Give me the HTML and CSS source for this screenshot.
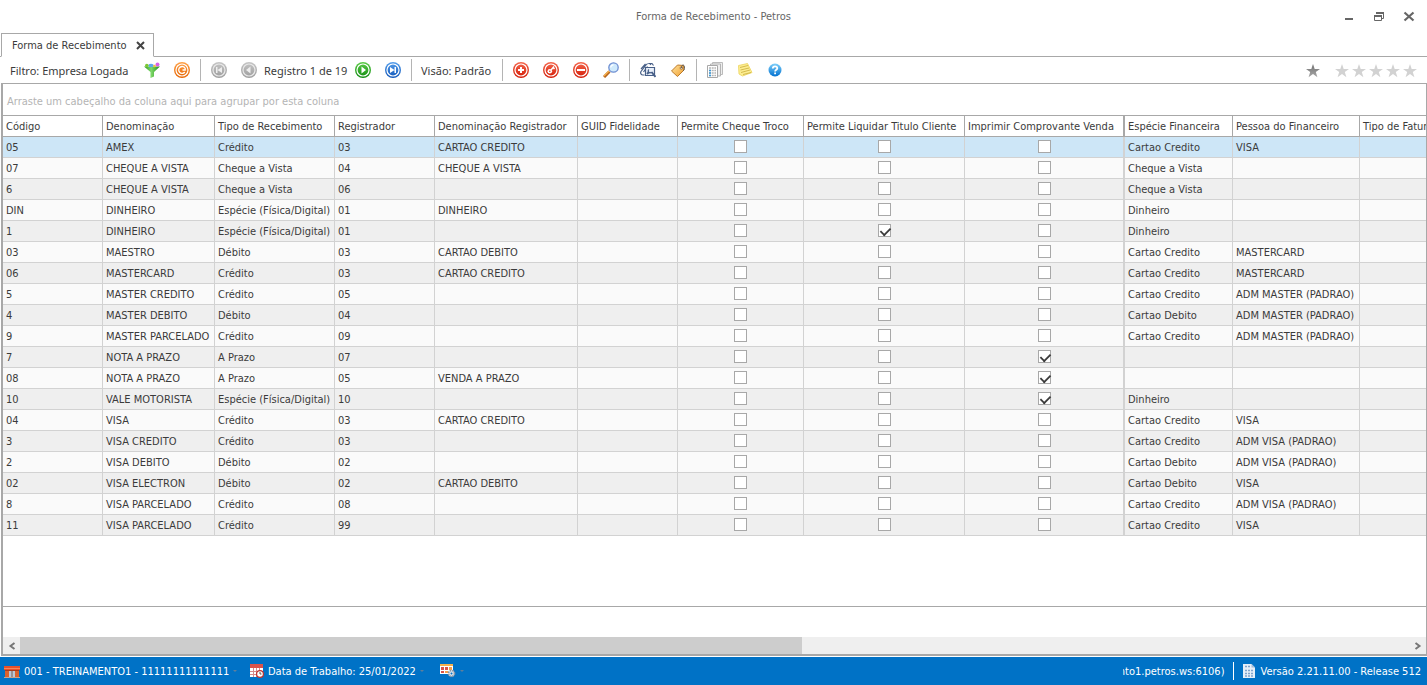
FILE: index.html
```html
<!DOCTYPE html>
<html lang="pt-BR">
<head>
    <meta charset="utf-8">
    <title>Forma de Recebimento - Petros</title>
    <link rel="stylesheet" href="styles.css">
</head>
<body>
    <!-- shared gradients -->
    <svg class="defs" aria-hidden="true">
        <defs>
            <linearGradient id="g-green" x1="0" y1="0" x2="0" y2="1"><stop offset="0" stop-color="#5fce4a"/><stop offset="1" stop-color="#0f8a10"/></linearGradient>
            <linearGradient id="g-orange" x1="0" y1="0" x2="0" y2="1"><stop offset="0" stop-color="#ffa34a"/><stop offset="1" stop-color="#e66300"/></linearGradient>
            <linearGradient id="g-red" x1="0" y1="0" x2="0" y2="1"><stop offset="0" stop-color="#f4694f"/><stop offset="1" stop-color="#d31a05"/></linearGradient>
            <linearGradient id="g-blue" x1="0" y1="0" x2="0" y2="1"><stop offset="0" stop-color="#58a0ec"/><stop offset="1" stop-color="#0f55b8"/></linearGradient>
            <linearGradient id="g-gray" x1="0" y1="0" x2="0" y2="1"><stop offset="0" stop-color="#c6c6c6"/><stop offset="1" stop-color="#9c9c9c"/></linearGradient>
            <linearGradient id="g-help" x1="0" y1="0" x2="0" y2="1"><stop offset="0" stop-color="#7fd0fa"/><stop offset="1" stop-color="#0070d0"/></linearGradient>
            <linearGradient id="g-star" x1="0" y1="0" x2="0" y2="1"><stop offset="0" stop-color="#707070"/><stop offset="1" stop-color="#a8a8a8"/></linearGradient>
            <linearGradient id="g-tag" x1="0" y1="0" x2="1" y2="1"><stop offset="0" stop-color="#ffe3a0"/><stop offset="1" stop-color="#f0a030"/></linearGradient>
            <linearGradient id="g-funnel"><stop offset="0" stop-color="#2c9a24"/><stop offset=".45" stop-color="#7ed968"/><stop offset="1" stop-color="#1f8a1a"/></linearGradient>
        </defs>
    </svg>

    <header class="titlebar">
        <h1>Forma de Recebimento - Petros</h1>
        <div class="window-buttons">
            <button aria-label="Minimizar"><svg width="12" height="12"><path d="M2 7h8v2H2z" fill="#666"/></svg></button>
            <button aria-label="Restaurar"><svg width="12" height="12"><path d="M3.5 3V1.500h7v6H9" fill="none" stroke="#666"/><path d="M3 1h8v2H3z" fill="#666"/><path d="M1.500 4.500h7v5h-7z" fill="none" stroke="#666"/><path d="M1 4h8v2H1z" fill="#666"/></svg></button>
            <button aria-label="Fechar"><svg width="12" height="12"><path d="M1.500 1.500l9 8M10.500 1.500l-9 8" stroke="#666" stroke-width="2.200"/></svg></button>
        </div>
    </header>

    <nav class="tabs">
        <div class="tab">
            <span>Forma de Recebimento</span>
            <button aria-label="Fechar aba"><svg width="9" height="9"><path d="M1 1l7 7M8 1l-7 7" stroke="#444" stroke-width="2"/></svg></button>
        </div>
    </nav>

    <div class="toolbar">
        <button class="label filter">Filtro: Empresa Logada</button>
        <button class="tool" aria-label="Filtrar"><svg width="16" height="16"><path d="M0 4.500h16L10 10v4.500L6.500 16v-6z" fill="url(#g-funnel)"/><ellipse cx="7" cy="3.500" rx="2.800" ry="1.800" fill="#5fa8ea"/><circle cx="2.800" cy="3.500" r="1.800" fill="#7cc832"/><circle cx="10.500" cy="4" r="1.300" fill="#f2c03a"/><circle cx="13.500" cy="2.500" r="2" fill="#d95fe8"/></svg></button>
        <button class="tool" aria-label="Atualizar"><svg width="16" height="16"><circle cx="8" cy="8" r="8" fill="url(#g-orange)"/><circle cx="8" cy="8" r="6" fill="none" stroke="#fff" stroke-width="1.200"/><path d="M10.800 10A3.400 3.400 0 1 1 11.200 6.500V8H8.500" fill="none" stroke="#fff" stroke-width="1.300"/></svg></button>
        <i class="sep"></i>
        <button class="tool" aria-label="Primeiro" disabled><svg width="16" height="16"><circle cx="8" cy="8" r="8" fill="url(#g-gray)"/><circle cx="8" cy="8" r="6" fill="none" stroke="#e8e8e8" stroke-width="1.200"/><path d="M5 5h1.500v6H5zM11 5v6L6.500 8z" fill="#eee"/></svg></button>
        <button class="tool" aria-label="Anterior" disabled><svg width="16" height="16"><circle cx="8" cy="8" r="8" fill="url(#g-gray)"/><circle cx="8" cy="8" r="6" fill="none" stroke="#e8e8e8" stroke-width="1.200"/><path d="M9.500 4.500v7L5 8z" fill="#eee"/></svg></button>
        <span class="record">Registro 1 de 19</span>
        <button class="tool" aria-label="Próximo"><svg width="16" height="16"><circle cx="8" cy="8" r="8" fill="url(#g-green)"/><circle cx="8" cy="8" r="6" fill="none" stroke="#fff" stroke-width="1.200"/><path d="M6.500 4.500v7L11 8z" fill="#fff"/></svg></button>
        <button class="tool" aria-label="Último"><svg width="16" height="16"><circle cx="8" cy="8" r="8" fill="url(#g-blue)"/><circle cx="8" cy="8" r="6" fill="none" stroke="#fff" stroke-width="1.200"/><path d="M9.500 5H11v6H9.500zM5 5v6l4.500-3z" fill="#fff"/></svg></button>
        <i class="sep"></i>
        <button class="label view">Visão: Padrão</button>
        <i class="sep"></i>
        <button class="tool" aria-label="Novo"><svg width="16" height="16"><circle cx="8" cy="8" r="8" fill="url(#g-red)"/><circle cx="8" cy="8" r="6" fill="none" stroke="#fff" stroke-width="1.200"/><path d="M7 5h2v2h2v2H9v2H7V9H5V7h2z" fill="#fff"/></svg></button>
        <button class="tool" aria-label="Editar"><svg width="16" height="16"><circle cx="8" cy="8" r="8" fill="url(#g-red)"/><circle cx="8" cy="8" r="6" fill="none" stroke="#fff" stroke-width="1.200"/><circle cx="6.800" cy="9.200" r="2.300" fill="#fff"/><circle cx="6.800" cy="9.200" r=".8" fill="#df3a20"/><path d="M8 8l3-3.500M10 5.500l1.500 1.500" stroke="#fff" stroke-width="1.500"/></svg></button>
        <button class="tool" aria-label="Excluir"><svg width="16" height="16"><circle cx="8" cy="8" r="8" fill="url(#g-red)"/><circle cx="8" cy="8" r="6" fill="none" stroke="#fff" stroke-width="1.200"/><path d="M4 7h8v2H4z" fill="#fff"/></svg></button>
        <button class="tool" aria-label="Pesquisar"><svg width="16" height="16"><path d="M1 15l5.500-5.500" stroke="#b8651c" stroke-width="3"/><path d="M1 14l5-5" stroke="#f6b04a" stroke-width="1.300"/><circle cx="10.500" cy="5.500" r="4.700" fill="#cfeafc" stroke="#6f8fd2" stroke-width="1.300"/><path d="M7.800 5.500a2.700 2.700 0 0 1 2.700-2.700" stroke="#fff" stroke-width="1.300" fill="none"/></svg></button>
        <i class="sep"></i>
        <button class="tool" aria-label="Anexos"><svg width="16" height="16"><path d="M4.500 13H3a2.300 2.300 0 0 1-2-3.500L6 3c1.500-2 4-2 5 0M3.500 10L7.500 4.500M1 7l4.500-5M8.500 1.500h3.500l1.500 2" fill="none" stroke="#486088" stroke-width="1.200"/><path d="M5.500 5.500h9v8h-9z" fill="#e9f0fa" stroke="#486088" stroke-width="1.200"/><path d="M9 7.500a1.800 1.800 0 1 0 2.500 2.500" fill="none" stroke="#486088" stroke-width="1.300"/><path d="M9 10l-2 2M11.500 10l4 5" stroke="#486088" stroke-width="2"/></svg></button>
        <button class="tool" aria-label="Etiquetas"><svg width="16" height="16"><path d="M1.500 9L7.500 3l6 .5.500 4.500-6.500 6.500z" fill="url(#g-tag)" stroke="#bd7b2c"/><circle cx="11.300" cy="6" r="1.200" fill="#fff" stroke="#8a5a22" stroke-width=".8"/><path d="M11.500 6c0-4 3-3.500 3-1s-.5 3-1.500 4" fill="none" stroke="#555" stroke-width=".9"/></svg></button>
        <i class="sep"></i>
        <button class="tool" aria-label="Relatórios"><svg width="16" height="16"><path d="M5.500.5h10v12h-10z" fill="#eee" stroke="#bbb"/><path d="M3.500 2h10v12h-10z" fill="#eee" stroke="#b4b4b4"/><path d="M.5 3.500h10v12H.5z" fill="#fff" stroke="#a8a8a8"/><path d="M2 6h7M2 8.500h7M2 11h7M2 13.500h7" stroke="#b4b4b4" stroke-dasharray="2 .7" stroke-width="1.500"/><path d="M2 8.500h2M2 11h2M2 13.500h2" stroke="#3d9ad8" stroke-width="1.500"/></svg></button>
        <button class="tool" aria-label="Notas"><svg width="16" height="16"><path d="M1.500 3.500L10.500 1.500 15 10.500 5.500 14l-3.500-2z" fill="#fdee92" stroke="#ecd35a" stroke-width=".8"/><path d="M3 5.500l8-2M3.500 8l8.500-2M4 10.500l9-2.500M6 12.500l8-2" stroke="#c9ac3c" stroke-width=".8"/></svg></button>
        <button class="tool" aria-label="Ajuda"><svg width="16" height="16"><circle cx="8" cy="8" r="6.500" fill="url(#g-help)"/><path d="M5.800 6.500c0-2.800 4.500-2.700 4.500-.3 0 1.500-2.200 1.500-2.200 3.300M8.100 10.500v1.800" fill="none" stroke="#fff" stroke-width="1.800"/></svg></button>
        <div class="rating">
            <svg width="15" height="15"><path d="M8 1l1.700 4.900H15L10.800 9l1.600 5.200L8 11.100l-4.400 3.100L5.200 9 1 5.900h5.300z" fill="url(#g-star)"/></svg>
            <svg width="84" height="15"><g fill="#d2d2d2"><path id="star" d="M8 1l1.700 4.900H15L10.800 9l1.600 5.200L8 11.100l-4.400 3.100L5.200 9 1 5.900h5.300z"/><use href="#star" x="17"/><use href="#star" x="34"/><use href="#star" x="51"/><use href="#star" x="68"/></g></svg>
        </div>
    </div>

    <main class="grid">
        <p class="group-panel">Arraste um cabeçalho da coluna aqui para agrupar por esta coluna</p>
        <div class="rows">
            <table>
                <colgroup>
                    <col class="w100"><col class="w112"><col class="w120"><col class="w100">
                    <col class="w143"><col class="w100"><col class="w126"><col class="w161">
                    <col class="w160"><col class="w108"><col class="w127"><col class="w120">
                </colgroup>
                <thead>
                    <tr>
                        <th>Código</th>
                        <th>Denominação</th>
                        <th>Tipo de Recebimento</th>
                        <th>Registrador</th>
                        <th>Denominação Registrador</th>
                        <th>GUID Fidelidade</th>
                        <th>Permite Cheque Troco</th>
                        <th>Permite Liquidar Titulo Cliente</th>
                        <th class="fixed">Imprimir Comprovante Venda</th>
                        <th>Espécie Financeira</th>
                        <th>Pessoa do Financeiro</th>
                        <th>Tipo de Fatura</th>
                    </tr>
                </thead>
                <tbody id="rows"></tbody>
            </table>
        </div>
        <div class="footer-panel"></div>
        <div class="scrollbar">
            <button aria-label="Rolar para a esquerda"><svg width="8" height="8"><path d="M6.500 1L2.500 4l4 3" fill="none" stroke="#777" stroke-width="2"/></svg></button>
            <div class="track"><div class="thumb"></div></div>
            <button aria-label="Rolar para a direita"><svg width="8" height="8"><path d="M1.500 1l4 3-4 3" fill="none" stroke="#777" stroke-width="2"/></svg></button>
        </div>
    </main>

    <footer class="statusbar">
        <button class="company">
            <svg width="16" height="14"><path d="M0 2h16v4H0z" fill="#e8502a"/><path d="M0 4h16v1H0z" fill="#f7875a"/><path d="M1 6h4v7H1zM11 6h4v7h-4z" fill="#d9622e"/><path d="M1 6h14v1H1z" fill="#a83a1c"/><path d="M5 7h6v6H5z" fill="#b9c8d8"/><path d="M7.500 7h1v6h-1z" fill="#7c5a50"/><path d="M0 13h16v1H0z" fill="#c9a28c"/></svg>
            <span>001 - TREINAMENTO1 - 11111111111111</span>
            <i class="arrow"></i>
        </button>
        <button class="workdate">
            <svg width="14" height="14"><path d="M0 1h13v12H0z" fill="#fff"/><path d="M0 0h13v4H0z" fill="#d9534a"/><path d="M0 7.500h13M0 10.500h13M3.500 4v9M6.500 4v9M9.500 4v9" stroke="#d98a88"/><circle cx="10" cy="10" r="3.400" fill="#fff" stroke="#c0322c" stroke-width="1.200"/><path d="M10 8v2h1.500" stroke="#555" fill="none"/></svg>
            <span>Data de Trabalho: 25/01/2022</span>
            <i class="arrow"></i>
        </button>
        <button class="schedule" aria-label="Agenda">
            <svg width="16" height="14"><path d="M0 0h13v10H0z" fill="#fff"/><path d="M0 0h13v2H0z" fill="#f5b14c"/><path d="M1 3h3v3H1zM5 3h3v3H5zM1 7h3v2H1z" fill="#d9534a"/><path d="M9 3h3v3H9zM5 7h3v2H5z" fill="#f8a04a"/><circle cx="11.500" cy="9.500" r="3" fill="#dde5ee" stroke="#8795a6" stroke-width="1.600" stroke-dasharray="1.600 .8"/><circle cx="11.500" cy="9.500" r="1" fill="#0072c6"/></svg>
            <i class="arrow"></i>
        </button>
        <span class="server"><span>treinamento1.petros.ws:6106)</span></span>
        <span class="version">
            <svg width="12" height="14"><path d="M0 0h8.500L12 3.500V14H0z" fill="#e6eff8"/><path d="M8.500 0v3.500H12z" fill="#9dbbd9"/><path d="M2 2.500h5M2 6.500h8M2 9.500h8M2 12h8" stroke="#7fa3cb" stroke-width="1.500" stroke-dasharray="2 1"/></svg>
            <span>Versão 2.21.11.00 - Release 512</span>
        </span>
    </footer>

    <script>
        // código, denominação, tipo, registrador, denominação registrador, marcas (troco, titulo, comprovante), espécie, pessoa
        var data = [
            ['05', 'AMEX', 'Crédito', '03', 'CARTAO CREDITO', '000', 'Cartao Credito', 'VISA'],
            ['07', 'CHEQUE A VISTA', 'Cheque a Vista', '04', 'CHEQUE A VISTA', '000', 'Cheque a Vista', ''],
            ['6', 'CHEQUE A VISTA', 'Cheque a Vista', '06', '', '000', 'Cheque a Vista', ''],
            ['DIN', 'DINHEIRO', 'Espécie (Física/Digital)', '01', 'DINHEIRO', '000', 'Dinheiro', ''],
            ['1', 'DINHEIRO', 'Espécie (Física/Digital)', '01', '', '010', 'Dinheiro', ''],
            ['03', 'MAESTRO', 'Débito', '03', 'CARTAO DEBITO', '000', 'Cartao Credito', 'MASTERCARD'],
            ['06', 'MASTERCARD', 'Crédito', '03', 'CARTAO CREDITO', '000', 'Cartao Credito', 'MASTERCARD'],
            ['5', 'MASTER CREDITO', 'Crédito', '05', '', '000', 'Cartao Credito', 'ADM MASTER (PADRAO)'],
            ['4', 'MASTER DEBITO', 'Débito', '04', '', '000', 'Cartao Debito', 'ADM MASTER (PADRAO)'],
            ['9', 'MASTER PARCELADO', 'Crédito', '09', '', '000', 'Cartao Credito', 'ADM MASTER (PADRAO)'],
            ['7', 'NOTA A PRAZO', 'A Prazo', '07', '', '001', '', ''],
            ['08', 'NOTA A PRAZO', 'A Prazo', '05', 'VENDA A PRAZO', '001', '', ''],
            ['10', 'VALE MOTORISTA', 'Espécie (Física/Digital)', '10', '', '001', 'Dinheiro', ''],
            ['04', 'VISA', 'Crédito', '03', 'CARTAO CREDITO', '000', 'Cartao Credito', 'VISA'],
            ['3', 'VISA CREDITO', 'Crédito', '03', '', '000', 'Cartao Credito', 'ADM VISA (PADRAO)'],
            ['2', 'VISA DEBITO', 'Débito', '02', '', '000', 'Cartao Debito', 'ADM VISA (PADRAO)'],
            ['02', 'VISA ELECTRON', 'Débito', '02', 'CARTAO DEBITO', '000', 'Cartao Debito', 'VISA'],
            ['8', 'VISA PARCELADO', 'Crédito', '08', '', '000', 'Cartao Credito', 'ADM VISA (PADRAO)'],
            ['11', 'VISA PARCELADO', 'Crédito', '99', '', '000', 'Cartao Credito', 'VISA']
        ];
        var checkLabels = ['Permite Cheque Troco', 'Permite Liquidar Titulo Cliente', 'Imprimir Comprovante Venda'];
        var html = '';
        data.forEach(function (r, n) {
            html += n === 0 ? '<tr class="selected">' : '<tr>';
            for (var i = 0; i < 5; i++) html += '<td>' + r[i] + '</td>';
            html += '<td></td>';
            checkLabels.forEach(function (label, i) {
                html += '<td class="check' + (i === 2 ? ' fixed' : '') + '"><input type="checkbox" aria-label="' + label + '"' + (r[5][i] === '1' ? ' checked' : '') + '></td>';
            });
            html += '<td>' + r[6] + '</td><td>' + r[7] + '</td><td></td></tr>';
        });
        document.getElementById('rows').innerHTML = html;
    </script>
</body>
</html>
```
FILE: styles.css
```css
* {
    box-sizing: border-box;
}
body {
    margin: 0;
    height: 100vh;
    display: flex;
    flex-direction: column;
    overflow: hidden;
    font-family: Tahoma, "DejaVu Sans Condensed", sans-serif;
    font-size: 11px;
    color: #3b3b3b;
    background-color: #fff;
}
button {
    display: flex;
    align-items: center;
    justify-content: center;
    padding: 0;
    border: none;
    background: none;
    font: inherit;
    color: inherit;
    white-space: nowrap;
}
svg {
    display: block;
    flex: none;
}
.defs {
    position: absolute;
    width: 0;
    height: 0;
}

/* title bar and tabs */
.titlebar {
    display: grid;
    grid-template-columns: 1fr auto 1fr;
    align-items: center;
    height: 33px;
}
.titlebar h1 {
    grid-column: 2;
    margin: 0;
    font-size: 11px;
    font-weight: normal;
    color: #666;
}
.window-buttons {
    display: flex;
    justify-content: flex-end;
    padding-right: 3px;
}
.window-buttons button {
    width: 30px;
    height: 20px;
}
.tabs {
    display: flex;
    height: 24px;
    padding-left: 1px;
    border-bottom: 1px solid #a8a8a8;
}
.tab {
    display: flex;
    align-items: center;
    justify-content: space-between;
    width: 153px;
    height: 24px;
    padding: 0 8px 0 10px;
    border: 1px solid #a8a8a8;
    border-bottom-color: #fff;
}

/* toolbar */
.toolbar {
    display: flex;
    align-items: center;
    height: 26px;
    padding: 0 9px 0 4px;
    font-family: "Segoe UI", "Noto Sans", sans-serif;
}
.label {
    justify-content: flex-start;
    padding: 0 6px;
}
.filter {
    width: 133px;
}
.view {
    width: 84px;
}
.record {
    width: 84px;
    white-space: nowrap;
}
.tool {
    width: 30px;
    height: 24px;
}
.sep {
    width: 1px;
    height: 22px;
    margin: 0 3px;
    background-color: #b4b4b4;
}
.rating {
    display: flex;
    align-items: center;
    gap: 14px;
    margin-left: auto;
}

/* grid */
.grid {
    flex: 1;
    display: flex;
    flex-direction: column;
    min-height: 0;
    margin: 0 0 1px 1px;
    border: 1px solid #a8a8a8;
    border-width: 1px 1px 2px 2px;
}
.group-panel {
    flex: none;
    height: 32px;
    margin: 0;
    padding-left: 4px;
    line-height: 35px;
    border-bottom: 1px solid #a8a8a8;
    color: #b4b4b4;
}
.rows {
    flex: 1;
    min-height: 0;
    overflow: hidden;
}
table {
    width: 1477px;
    table-layout: fixed;
    border-collapse: separate;
    border-spacing: 0;
}
.w100 { width: 100px; }
.w108 { width: 108px; }
.w112 { width: 112px; }
.w120 { width: 120px; }
.w126 { width: 126px; }
.w127 { width: 127px; }
.w143 { width: 143px; }
.w160 { width: 160px; }
.w161 { width: 161px; }
th, td {
    height: 21px;
    padding: 1px 0 0 3px;
    line-height: 19px;
    text-align: left;
    font-weight: normal;
    white-space: nowrap;
    border-right: 1px solid #d2d2d2;
    border-bottom: 1px solid #d2d2d2;
}
th {
    border-color: #a8a8a8;
}
.fixed {
    border-right-width: 2px;
}
tbody tr:nth-child(even) {
    background-color: #fafafa;
}
tbody tr:nth-child(odd) {
    background-color: #efefef;
}
tbody tr.selected {
    background-color: #cde6f7;
}
td.check {
    padding: 0 0 1px;
}
.check input {
    appearance: none;
    display: block;
    width: 13px;
    height: 13px;
    margin: 0 auto;
    border: 1px solid #a8a8a8;
    background-color: #fff;
}
.check input:checked::before {
    content: "";
    display: block;
    width: 9px;
    height: 5px;
    margin: 2px 1px;
    border: solid #3b3b3b;
    border-width: 0 0 2px 2px;
    transform: rotate(-45deg) scale(0.9);
}
.footer-panel {
    height: 31px;
    border-top: 1px solid #a8a8a8;
}
.scrollbar {
    display: flex;
    height: 17px;
    background-color: #efefef;
}
.scrollbar button {
    width: 17px;
}
.track {
    flex: 1;
}
.thumb {
    width: 56.300%;
    height: 17px;
    background-color: #cdcdcd;
}

/* status bar */
.statusbar {
    display: flex;
    align-items: center;
    height: 28px;
    padding: 0 6px 0 4px;
    background-color: #0072c6;
    color: #fff;
}
.statusbar button {
    justify-content: flex-start;
    gap: 4px;
}
.company {
    width: 246px;
}
.workdate {
    width: 190px;
}
.arrow {
    border: 2px solid transparent;
    border-top-color: #5d7f9c;
    border-bottom: none;
}
.server {
    display: flex;
    justify-content: flex-end;
    width: 102px;
    margin-left: auto;
    overflow: hidden;
    white-space: nowrap;
}
.version {
    display: flex;
    align-items: center;
    gap: 6px;
    height: 18px;
    margin-left: 8px;
    padding-left: 9px;
    border-left: 1px solid #fff;
    white-space: nowrap;
}
```
